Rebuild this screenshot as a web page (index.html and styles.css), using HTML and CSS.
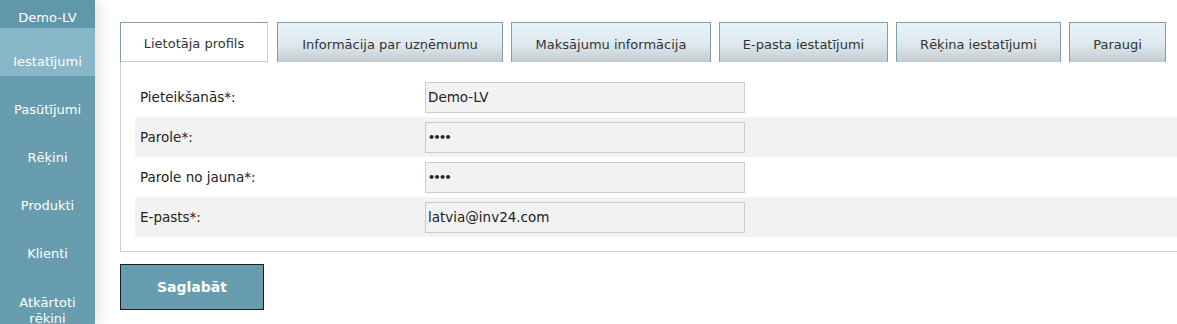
FILE: index.html
```html
<!DOCTYPE html>
<html lang="lv">
<head>
<meta charset="utf-8">
<title>Iestatījumi</title>
<link rel="stylesheet" href="styles.css">
</head>
<body>
<div class="app">
  <nav class="sidebar">
    <div class="brand">Demo-LV</div>
    <a class="nav-item active" href="#">Iestatījumi</a>
    <a class="nav-item" href="#">Pasūtījumi</a>
    <a class="nav-item" href="#">Rēķini</a>
    <a class="nav-item" href="#">Produkti</a>
    <a class="nav-item" href="#">Klienti</a>
    <a class="nav-item" href="#">Atkārtoti rēķini</a>
  </nav>
  <main class="content">
    <div class="tabs">
      <div class="tab active t1">Lietotāja profils</div>
      <div class="tab t2">Informācija par uzņēmumu</div>
      <div class="tab t3">Maksājumu informācija</div>
      <div class="tab t4">E-pasta iestatījumi</div>
      <div class="tab t5">Rēķina iestatījumi</div>
      <div class="tab t6">Paraugi</div>
    </div>
    <div class="panel">
      <div class="row">
        <label class="label">Pieteikšanās*:</label>
        <input class="field" type="text" value="Demo-LV">
      </div>
      <div class="row alt">
        <label class="label">Parole*:</label>
        <input class="field" type="password" value="1234">
      </div>
      <div class="row">
        <label class="label">Parole no jauna*:</label>
        <input class="field" type="password" value="1234">
      </div>
      <div class="row alt">
        <label class="label">E-pasts*:</label>
        <input class="field" type="text" value="latvia@inv24.com">
      </div>
    </div>
    <button class="save" type="button">Saglabāt</button>
  </main>
</div>
</body>
</html>
```

FILE: styles.css
```css
html, body {
  margin: 0;
  padding: 0;
  background: #fff;
  font-family: "DejaVu Sans", Verdana, sans-serif;
  font-size: 13px;
  color: #222;
  overflow: hidden;
}

.app {
  display: flex;
  height: 324px;
}

.sidebar {
  width: 95px;
  flex: none;
  background: #689db0;
  display: flex;
  flex-direction: column;
  box-shadow: 4px 0 14px rgba(0, 0, 0, 0.12);
  position: relative;
  z-index: 1;
  overflow: hidden;
}

.brand {
  height: 28px;
  flex: none;
  background: #6097aa;
  color: #fff;
  text-align: center;
  line-height: 36px;
  font-size: 13px;
}

.nav-item {
  display: block;
  box-sizing: border-box;
  flex: none;
  text-align: center;
  height: 48px;
  padding-top: 26px;
  color: #fff;
  text-decoration: none;
  font-size: 13px;
  line-height: 16px;
}

.nav-item.active {
  background: #87b7c8;
}

.nav-item:last-child {
  height: 64px;
  padding-top: 27px;
}

.content {
  flex: 1;
  padding: 22px 0 0 25px;
  min-width: 0;
}

.tabs {
  display: flex;
  gap: 8px;
  white-space: nowrap;
}

.tab {
  box-sizing: border-box;
  height: 40px;
  padding-top: 2px;
  line-height: 40px;
  text-align: center;
  color: #333;
  font-size: 13px;
  border: 1px solid #7e9fab;
  border-bottom: none;
  background: linear-gradient(#e8f3f8 0%, #dde9ef 55%, #c3cbcf 100%);
}

.tab.active {
  background: #fff;
  border-right-color: #cfcfcf;
  border-bottom: 1px solid #c8c8c8;
  line-height: 38px;
}

.t1 { width: 148px; }
.t2 { width: 226px; margin-left: 1px; }
.t3 { width: 200px; }
.t4 { width: 169px; }
.t5 { width: 165px; }
.t6 { width: 97px; }

.panel {
  border: 1px solid #cfcfcf;
  border-top: none;
  border-right: none;
  padding: 15px 0 14px 14px;
}

.row {
  display: flex;
  align-items: center;
  height: 40px;
}

.row.alt {
  background: #f2f2f2;
}

.label {
  width: 285px;
  padding-left: 5px;
  flex: none;
  color: #222;
  font-size: 13.5px;
}

.field {
  box-sizing: border-box;
  width: 320px;
  height: 31px;
  border: 1px solid #cbcbcb;
  background: #f2f2f2;
  font-family: "DejaVu Sans", Verdana, sans-serif;
  font-size: 13.5px;
  color: #222;
  padding: 0 2px;
  margin: 0;
  outline: none;
}

.field[type="password"] {
  font-size: 11px;
  letter-spacing: -1.5px;
  font-weight: bold;
}

.save {
  margin-top: 12px;
  width: 144px;
  height: 46px;
  background: #689db0;
  border: 1px solid #1e1e1e;
  color: #fff;
  font-family: "DejaVu Sans", Verdana, sans-serif;
  font-weight: bold;
  font-size: 14px;
  cursor: pointer;
  display: block;
}
```
